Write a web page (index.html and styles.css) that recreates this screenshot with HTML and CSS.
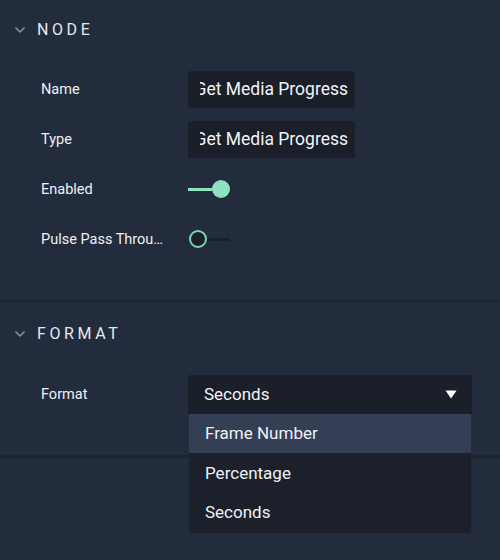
FILE: index.html
```html
<!DOCTYPE html>
<html>
<head>
<meta charset="utf-8">
<link rel="stylesheet" href="styles.css">
</head>
<body>
<div class="panel">
  <section class="section">
    <div class="section-header">
      <svg class="chevron" width="12" height="8" viewBox="0 0 12 8"><path d="M1.5 1.5 L6 6 L10.5 1.5" fill="none" stroke="#8a93a3" stroke-width="1.5"/></svg>
      <span class="section-title">NODE</span>
    </div>
    <div class="row">
      <div class="label">Name</div>
      <div class="input"><div class="input-clip"><span>Get Media Progress</span></div></div>
    </div>
    <div class="row">
      <div class="label">Type</div>
      <div class="input"><div class="input-clip"><span>Get Media Progress</span></div></div>
    </div>
    <div class="row">
      <div class="label">Enabled</div>
      <div class="toggle on"><div class="track"></div><div class="knob"></div></div>
    </div>
    <div class="row">
      <div class="label">Pulse Pass Through</div>
      <div class="toggle off"><div class="knob"></div><div class="track"></div></div>
    </div>
  </section>
  <section class="section second">
    <div class="section-header">
      <svg class="chevron" width="12" height="8" viewBox="0 0 12 8"><path d="M1.5 1.5 L6 6 L10.5 1.5" fill="none" stroke="#8a93a3" stroke-width="1.5"/></svg>
      <span class="section-title">FORMAT</span>
    </div>
    <div class="row">
      <div class="label">Format</div>
      <div class="select-wrap">
        <div class="select">
          <span>Seconds</span>
          <svg width="12" height="9" viewBox="0 0 12 9"><path d="M0.5 0.5 L11.5 0.5 L6 8.5 Z" fill="#ffffff"/></svg>
        </div>
        <div class="menu">
          <div class="item active">Frame Number</div>
          <div class="item">Percentage</div>
          <div class="item">Seconds</div>
        </div>
      </div>
    </div>
  </section>
</div>
</body>
</html>
```
FILE: styles.css
```css
html, body {
  margin: 0;
  padding: 0;
  background: #232c3c;
  width: 500px;
  height: 560px;
  overflow: hidden;
  font-family: Roboto, "Noto Sans", sans-serif;
  color: #e6eaf0;
}
.panel {
  display: flex;
  flex-direction: column;
}
.section {
  padding-bottom: 36px;
  border-bottom: 3px solid #1d2533;
}
.section.second {
  padding-top: 1px;
  padding-bottom: 36px;
}
.section-header {
  height: 58px;
  margin-bottom: 6px;
  display: flex;
  align-items: center;
  padding-left: 14px;
  box-sizing: border-box;
}
.section.second .section-header {
  margin-bottom: 7px;
}
.chevron {
  margin-right: 11px;
  margin-top: 1px;
}
.section-title {
  font-size: 16px;
  letter-spacing: 3.6px;
  color: #e4e9f0;
  font-weight: 400;
}
.row {
  height: 50px;
  display: flex;
  align-items: center;
  padding-left: 41px;
}
.label {
  width: 123px;
  margin-right: 24px;
  font-size: 14.5px;
  color: #eef1f5;
  white-space: nowrap;
  overflow: hidden;
  text-overflow: ellipsis;
}
.input {
  width: 167px;
  height: 37px;
  background: #1a1f29;
  border-radius: 2px;
  display: flex;
  align-items: center;
  padding: 0 7px 0 12px;
  box-sizing: border-box;
  font-size: 17.5px;
  color: #f2f4f7;
}
.input-clip {
  flex: 1;
  display: flex;
  justify-content: flex-end;
  overflow: hidden;
  white-space: nowrap;
}
.input-clip span {
  flex-shrink: 0;
}
.toggle {
  display: flex;
  align-items: center;
  width: 43px;
  height: 20px;
}
.toggle .track {
  height: 3px;
}
.toggle.on .track {
  width: 24px;
  background: #8de2c2;
}
.toggle.on .knob {
  width: 18px;
  height: 18px;
  border-radius: 50%;
  background: #8de2c2;
}
.toggle.off .knob {
  width: 14px;
  height: 14px;
  border-radius: 50%;
  border: 2.5px solid #7fd3b3;
  background: #1a1f29;
  margin-left: 0.5px;
}
.toggle.off .track {
  width: 23px;
  background: #1a1f29;
}
.select-wrap {
  position: relative;
}
.select {
  width: 284px;
  height: 39px;
  background: #1a1f29;
  border-radius: 3px 3px 0 0;
  display: flex;
  align-items: center;
  justify-content: space-between;
  padding: 0 15px 0 16px;
  box-sizing: border-box;
  font-size: 17px;
  color: #f2f4f7;
}
.select svg {
  margin-top: 1px;
}
.menu {
  position: absolute;
  top: 39px;
  left: 1px;
  width: 282px;
  background: #1b202a;
  border-radius: 0 0 3px 3px;
  padding-bottom: 1px;
}
.item {
  height: 39.5px;
  display: flex;
  align-items: center;
  padding-left: 16px;
  font-size: 17px;
  color: #eef1f5;
}
.item.active {
  background: #343f55;
}
```
